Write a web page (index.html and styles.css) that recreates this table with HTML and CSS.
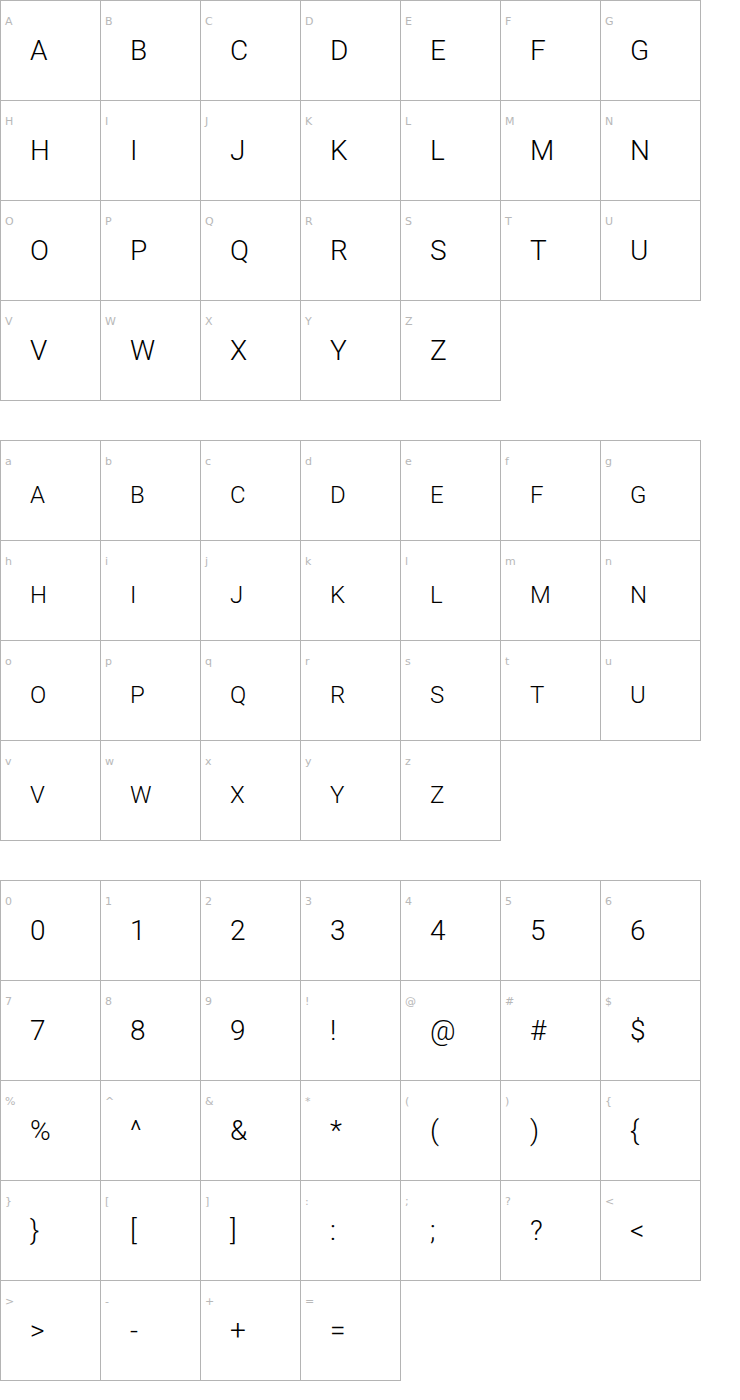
FILE: index.html
```html
<!DOCTYPE html>
<html>
<head>
<meta charset="utf-8">
<link rel="stylesheet" href="styles.css">
</head>
<body>
<div class="grid upper">
<div class="cell"><div class="lbl">A</div><div class="gl">A</div></div>
<div class="cell"><div class="lbl">B</div><div class="gl">B</div></div>
<div class="cell"><div class="lbl">C</div><div class="gl">C</div></div>
<div class="cell"><div class="lbl">D</div><div class="gl">D</div></div>
<div class="cell"><div class="lbl">E</div><div class="gl">E</div></div>
<div class="cell"><div class="lbl">F</div><div class="gl">F</div></div>
<div class="cell"><div class="lbl">G</div><div class="gl">G</div></div>
<div class="cell"><div class="lbl">H</div><div class="gl">H</div></div>
<div class="cell"><div class="lbl">I</div><div class="gl">I</div></div>
<div class="cell"><div class="lbl">J</div><div class="gl">J</div></div>
<div class="cell"><div class="lbl">K</div><div class="gl">K</div></div>
<div class="cell"><div class="lbl">L</div><div class="gl">L</div></div>
<div class="cell"><div class="lbl">M</div><div class="gl">M</div></div>
<div class="cell"><div class="lbl">N</div><div class="gl">N</div></div>
<div class="cell"><div class="lbl">O</div><div class="gl">O</div></div>
<div class="cell"><div class="lbl">P</div><div class="gl">P</div></div>
<div class="cell"><div class="lbl">Q</div><div class="gl">Q</div></div>
<div class="cell"><div class="lbl">R</div><div class="gl">R</div></div>
<div class="cell"><div class="lbl">S</div><div class="gl">S</div></div>
<div class="cell"><div class="lbl">T</div><div class="gl">T</div></div>
<div class="cell"><div class="lbl">U</div><div class="gl">U</div></div>
<div class="cell"><div class="lbl">V</div><div class="gl">V</div></div>
<div class="cell"><div class="lbl">W</div><div class="gl">W</div></div>
<div class="cell"><div class="lbl">X</div><div class="gl">X</div></div>
<div class="cell"><div class="lbl">Y</div><div class="gl">Y</div></div>
<div class="cell"><div class="lbl">Z</div><div class="gl">Z</div></div>
</div>
<div class="grid lower">
<div class="cell"><div class="lbl">a</div><div class="gl">a</div></div>
<div class="cell"><div class="lbl">b</div><div class="gl">b</div></div>
<div class="cell"><div class="lbl">c</div><div class="gl">c</div></div>
<div class="cell"><div class="lbl">d</div><div class="gl">d</div></div>
<div class="cell"><div class="lbl">e</div><div class="gl">e</div></div>
<div class="cell"><div class="lbl">f</div><div class="gl">f</div></div>
<div class="cell"><div class="lbl">g</div><div class="gl">g</div></div>
<div class="cell"><div class="lbl">h</div><div class="gl">h</div></div>
<div class="cell"><div class="lbl">i</div><div class="gl">i</div></div>
<div class="cell"><div class="lbl">j</div><div class="gl">j</div></div>
<div class="cell"><div class="lbl">k</div><div class="gl">k</div></div>
<div class="cell"><div class="lbl">l</div><div class="gl">l</div></div>
<div class="cell"><div class="lbl">m</div><div class="gl">m</div></div>
<div class="cell"><div class="lbl">n</div><div class="gl">n</div></div>
<div class="cell"><div class="lbl">o</div><div class="gl">o</div></div>
<div class="cell"><div class="lbl">p</div><div class="gl">p</div></div>
<div class="cell"><div class="lbl">q</div><div class="gl">q</div></div>
<div class="cell"><div class="lbl">r</div><div class="gl">r</div></div>
<div class="cell"><div class="lbl">s</div><div class="gl">s</div></div>
<div class="cell"><div class="lbl">t</div><div class="gl">t</div></div>
<div class="cell"><div class="lbl">u</div><div class="gl">u</div></div>
<div class="cell"><div class="lbl">v</div><div class="gl">v</div></div>
<div class="cell"><div class="lbl">w</div><div class="gl">w</div></div>
<div class="cell"><div class="lbl">x</div><div class="gl">x</div></div>
<div class="cell"><div class="lbl">y</div><div class="gl">y</div></div>
<div class="cell"><div class="lbl">z</div><div class="gl">z</div></div>
</div>
<div class="grid sym">
<div class="cell"><div class="lbl">0</div><div class="gl">0</div></div>
<div class="cell"><div class="lbl">1</div><div class="gl">1</div></div>
<div class="cell"><div class="lbl">2</div><div class="gl">2</div></div>
<div class="cell"><div class="lbl">3</div><div class="gl">3</div></div>
<div class="cell"><div class="lbl">4</div><div class="gl">4</div></div>
<div class="cell"><div class="lbl">5</div><div class="gl">5</div></div>
<div class="cell"><div class="lbl">6</div><div class="gl">6</div></div>
<div class="cell"><div class="lbl">7</div><div class="gl">7</div></div>
<div class="cell"><div class="lbl">8</div><div class="gl">8</div></div>
<div class="cell"><div class="lbl">9</div><div class="gl">9</div></div>
<div class="cell"><div class="lbl">!</div><div class="gl">!</div></div>
<div class="cell"><div class="lbl">@</div><div class="gl">@</div></div>
<div class="cell"><div class="lbl">#</div><div class="gl">#</div></div>
<div class="cell"><div class="lbl">$</div><div class="gl">$</div></div>
<div class="cell"><div class="lbl">%</div><div class="gl">%</div></div>
<div class="cell"><div class="lbl">^</div><div class="gl">^</div></div>
<div class="cell"><div class="lbl">&amp;</div><div class="gl">&amp;</div></div>
<div class="cell"><div class="lbl">*</div><div class="gl">*</div></div>
<div class="cell"><div class="lbl">(</div><div class="gl">(</div></div>
<div class="cell"><div class="lbl">)</div><div class="gl">)</div></div>
<div class="cell"><div class="lbl">{</div><div class="gl">{</div></div>
<div class="cell"><div class="lbl">}</div><div class="gl">}</div></div>
<div class="cell"><div class="lbl">[</div><div class="gl">[</div></div>
<div class="cell"><div class="lbl">]</div><div class="gl">]</div></div>
<div class="cell"><div class="lbl">:</div><div class="gl">:</div></div>
<div class="cell"><div class="lbl">;</div><div class="gl">;</div></div>
<div class="cell"><div class="lbl">?</div><div class="gl">?</div></div>
<div class="cell"><div class="lbl">&lt;</div><div class="gl">&lt;</div></div>
<div class="cell"><div class="lbl">&gt;</div><div class="gl">&gt;</div></div>
<div class="cell"><div class="lbl">-</div><div class="gl">-</div></div>
<div class="cell"><div class="lbl">+</div><div class="gl">+</div></div>
<div class="cell"><div class="lbl">=</div><div class="gl">=</div></div>
</div>
</body>
</html>
```
FILE: styles.css
```css
html, body {
  margin: 0;
  padding: 0;
  background: #ffffff;
}
.grid {
  display: grid;
  grid-template-columns: repeat(7, 100px);
  grid-auto-rows: 100px;
  margin-bottom: 40px;
}
.cell {
  box-sizing: border-box;
  width: 101px;
  height: 101px;
  border: 1px solid #b4b4b4;
  padding: 14px 0 0 4px;
}
.lbl {
  font-family: "DejaVu Sans", sans-serif;
  font-size: 11px;
  line-height: 13px;
  color: #b8b8b8;
  height: 13px;
}
.gl {
  font-family: Roboto, "DejaVu Sans", sans-serif;
  font-weight: 300;
  font-size: 28px;
  line-height: 28px;
  color: #000000;
  margin-top: 9px;
  padding-left: 25px;
}
.lower .gl {
  text-transform: uppercase;
  font-size: 24px;
  margin-top: 13px;
}
```
